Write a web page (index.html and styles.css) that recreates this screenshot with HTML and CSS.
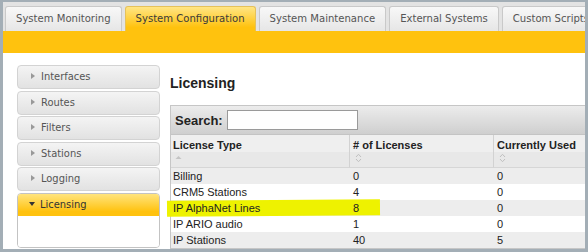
FILE: index.html
```html
<!DOCTYPE html>
<html lang="en">
<head>
  <meta charset="UTF-8">
  <title>System Configuration - Licensing</title>
  <link rel="stylesheet" href="styles.css">
</head>
<body>
  <div class="frame">
    <!-- Top navigation -->
    <div class="tabs">
      <div class="tab">System Monitoring</div>
      <div class="tab active">System Configuration</div>
      <div class="tab">System Maintenance</div>
      <div class="tab">External Systems</div>
      <div class="tab">Custom Scripts</div>
    </div>
    <div class="subbar"></div>

    <div class="page">
      <!-- Side menu -->
      <ul class="menu">
        <li class="menu-item"><span class="arrow"></span>Interfaces</li>
        <li class="menu-item"><span class="arrow"></span>Routes</li>
        <li class="menu-item"><span class="arrow"></span>Filters</li>
        <li class="menu-item"><span class="arrow"></span>Stations</li>
        <li class="menu-item"><span class="arrow"></span>Logging</li>
        <li class="menu-panel">
          <div class="menu-head"><span class="arrow down"></span>Licensing</div>
          <div class="menu-body"></div>
        </li>
      </ul>

      <!-- Main content -->
      <div class="content">
        <h1 class="title">Licensing</h1>
        <div class="grid">
          <div class="search-bar">
            <label class="search-label" for="search">Search:</label>
            <input class="search-input" id="search" type="text">
          </div>
          <table class="licenses">
            <thead>
              <tr>
                <th class="c1">License Type<div class="sort"><svg width="7" height="10" viewBox="0 0 7 10"><path d="M0.5 6 L3.5 3 L6.5 6 Z" fill="#c4c4c4"/></svg></div></th>
                <th class="c2"># of Licenses<div class="sort"><svg width="7" height="10" viewBox="0 0 7 10"><path d="M1 4 L3.5 1.3 L6 4 M1 6 L3.5 8.7 L6 6" fill="none" stroke="#c0c0c0" stroke-width="1"/></svg></div></th>
                <th class="c3">Currently Used<div class="sort"><svg width="7" height="10" viewBox="0 0 7 10"><path d="M1 4 L3.5 1.3 L6 4 M1 6 L3.5 8.7 L6 6" fill="none" stroke="#c0c0c0" stroke-width="1"/></svg></div></th>
              </tr>
            </thead>
            <tbody>
              <tr class="odd"><td>Billing</td><td>0</td><td>0</td></tr>
              <tr class="even"><td>CRM5 Stations</td><td>4</td><td>0</td></tr>
              <tr class="odd">
                <td class="marked"><span class="marker"></span><span class="over">IP AlphaNet Lines</span></td>
                <td><span class="over">8</span></td>
                <td>0</td>
              </tr>
              <tr class="even"><td>IP ARIO audio</td><td>1</td><td>0</td></tr>
              <tr class="odd"><td>IP Stations</td><td>40</td><td>5</td></tr>
            </tbody>
          </table>
        </div>
      </div>
    </div>
  </div>
</body>
</html>
```

FILE: styles.css
```css
/* Page frame */
html, body {
  margin: 0;
}

body {
  width: 588px;
  height: 252px;
  box-sizing: border-box;
  padding: 2px 3px 3px;
  background-color: #a3aeb6;
  overflow: hidden;
}

.frame {
  height: 247px;
  background-color: #fff;
  overflow: hidden;
}

/* Tabs */
.tabs {
  display: flex;
  align-items: flex-end;
  height: 29px;
  box-sizing: border-box;
  padding-left: 2px;
  background-color: #e3e3e3;
  white-space: nowrap;
  overflow: hidden;
}

.tab {
  flex-shrink: 0;
  height: 25px;
  box-sizing: border-box;
  margin-right: 3px;
  padding: 0 10px;
  line-height: 24px;
  font-family: "DejaVu Sans Condensed", "DejaVu Sans", sans-serif;
  font-stretch: condensed;
  font-size: 11.2px;
  color: #555;
  background: linear-gradient(#f8f8f8, #e6e6e6);
  border: 1px solid #c9c9c9;
  border-bottom: none;
  border-radius: 3px 3px 0 0;
}

.tab.active {
  color: #3a3a3a;
  background: linear-gradient(#ffe585, #ffc20e 85%);
  border-color: #e5c15a;
}

.subbar {
  height: 22px;
  background-color: #ffc20e;
}

/* Layout below the bars */
.page {
  display: flex;
  align-items: flex-start;
  padding: 12px 0 0 14px;
}

/* Side menu */
.menu {
  flex-shrink: 0;
  width: 143px;
  margin: 0;
  padding: 0;
  list-style: none;
  font-family: "DejaVu Sans Condensed", "DejaVu Sans", sans-serif;
  font-stretch: condensed;
  font-size: 11px;
}

.menu-item {
  height: 22px;
  margin-bottom: 1.5px;
  padding-left: 13px;
  line-height: 22px;
  color: #555;
  background: linear-gradient(#f4f4f4, #e2e2e2);
  border: 1px solid #d3d3d3;
  border-radius: 4px;
}

.arrow {
  display: inline-block;
  width: 0;
  height: 0;
  margin-right: 6px;
  vertical-align: 1px;
  border-top: 3px solid transparent;
  border-bottom: 3px solid transparent;
  border-left: 4px solid #999;
}

.arrow.down {
  margin-right: 5px;
  vertical-align: 2px;
  border-left: 3.5px solid transparent;
  border-right: 3.5px solid transparent;
  border-top: 4px solid #333;
  border-bottom: none;
}

.menu-panel {
  border: 1px solid #c3c3c3;
  border-radius: 4px;
  overflow: hidden;
}

.menu-head {
  height: 22px;
  padding-left: 11px;
  line-height: 22px;
  color: #333;
  background: linear-gradient(#ffe47e, #ffc20e 80%);
}

.menu-body {
  height: 31px;
  background-color: #fff;
}

/* Main content */
.content {
  flex-shrink: 0;
  margin-left: 10px;
  font-family: "Liberation Sans", Arial, sans-serif;
  color: #222;
}

.title {
  margin: 10px 0 14px;
  font-size: 14px;
  line-height: 16px;
  font-weight: bold;
}

.grid {
  width: 460px;
  border: 1px solid #c6c6c6;
}

.search-bar {
  display: flex;
  align-items: center;
  gap: 4px;
  height: 28px;
  padding-left: 4px;
  background: linear-gradient(#ececec, #cfcfcf);
  border-bottom: 1px solid #c4c4c4;
}

.search-label {
  font-size: 13px;
  font-weight: bold;
}

.search-input {
  width: 131px;
  height: 20px;
  box-sizing: border-box;
  margin: 0;
  padding: 0 3px;
  border: 1px solid #9a9a9a;
  background-color: #fff;
}

/* License table */
.licenses {
  width: 460px;
  table-layout: fixed;
  border-collapse: separate;
  border-spacing: 0;
  font-size: 11px;
}

.licenses th {
  box-sizing: border-box;
  padding: 4px 3px 0;
  line-height: 13px;
  text-align: left;
  font-weight: bold;
  background: linear-gradient(#efefef 17px, #e8e8e8 17px);
  border-right: 1px solid #d2d2d2;
  border-bottom: 1px solid #d6d6d6;
}

.licenses th.c1 {
  width: 179px;
  padding-left: 2px;
}

.licenses th.c2 {
  width: 144px;
}

.sort {
  height: 14px;
  padding-left: 2px;
}

.sort svg {
  display: block;
  margin-top: 1px;
}

.licenses td {
  height: 16px;
  padding: 0 3px;
  line-height: 16px;
  white-space: nowrap;
}

.licenses td:first-child {
  padding-left: 2px;
}

.licenses tr.odd td {
  background-color: #ededed;
}

.licenses tr.even td {
  background-color: #fff;
}

/* Hand-drawn highlighter mark */
.marked {
  position: relative;
}

.marker {
  position: absolute;
  left: -4px;
  top: 0;
  width: 213px;
  height: 16px;
  background-color: #eef200;
  transform: rotate(-0.35deg);
  z-index: 1;
}

.over {
  position: relative;
  z-index: 2;
}
```
